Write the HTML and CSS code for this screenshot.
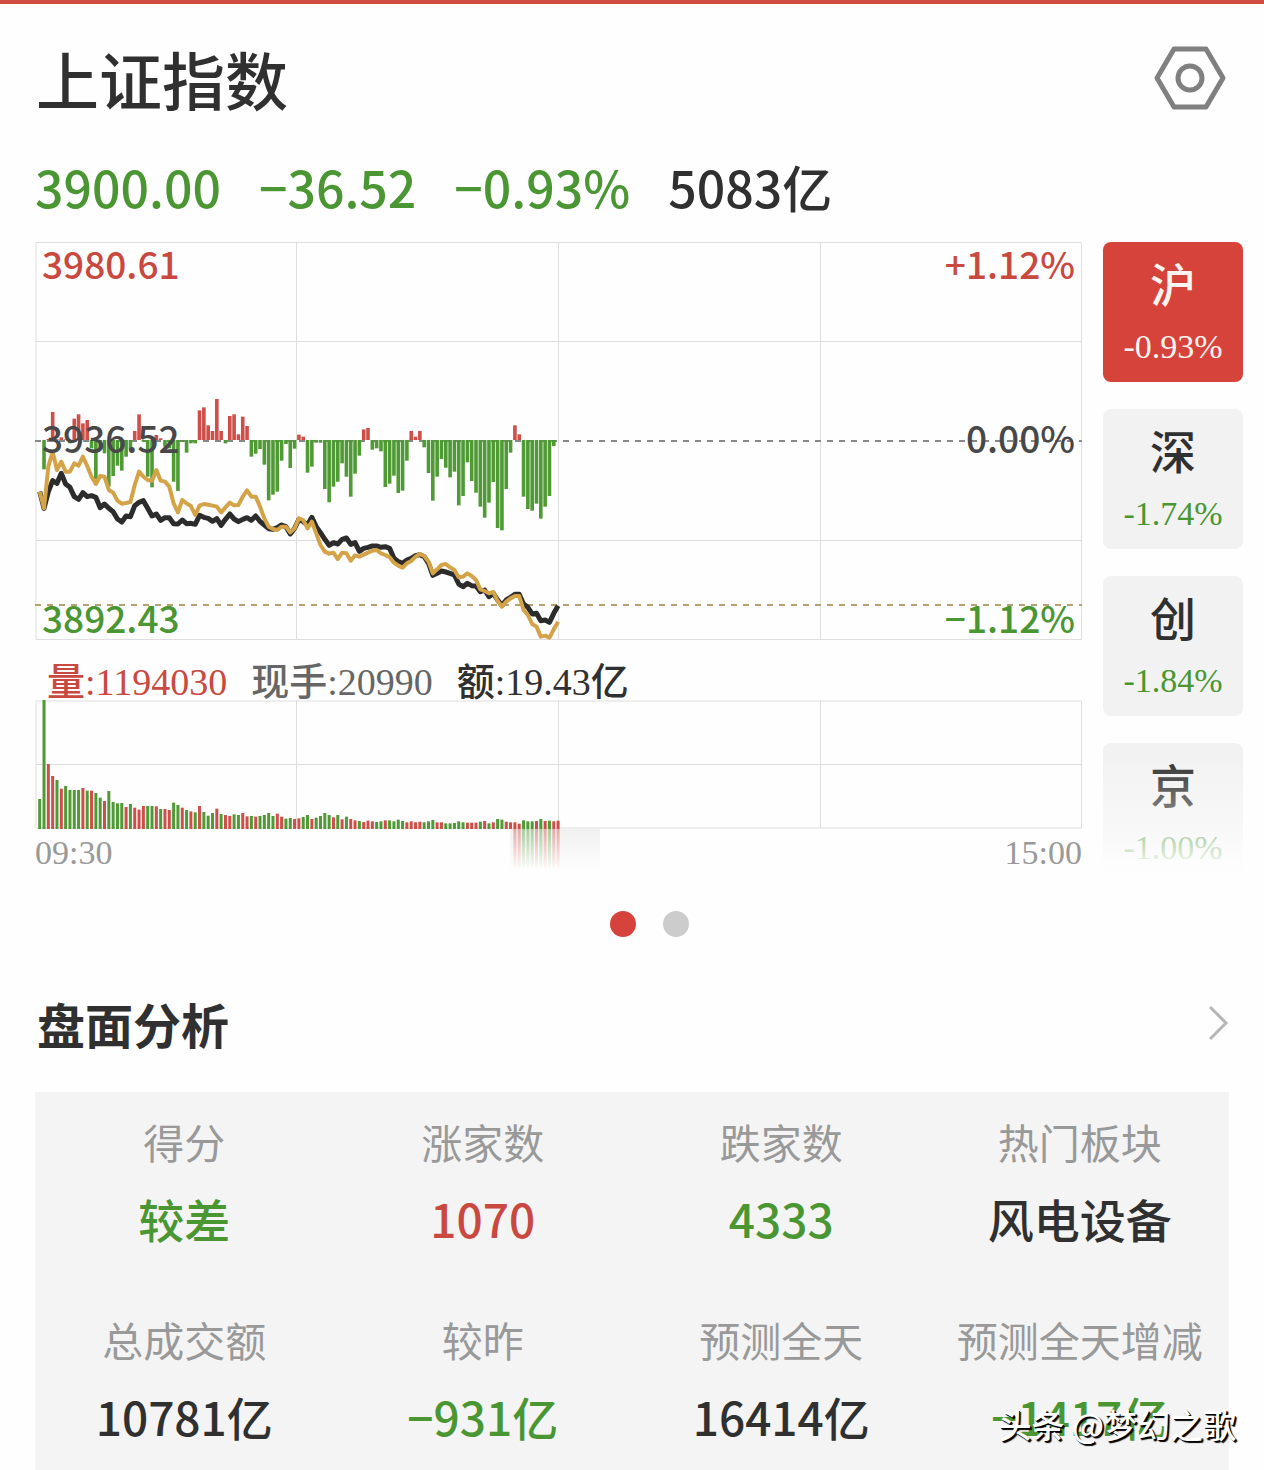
FILE: index.html
```
<!DOCTYPE html>
<html lang="zh-CN">
<head>
    <meta charset="UTF-8">
    <meta name="viewport" content="width=device-width, initial-scale=1.0">
    <title>上证指数</title>
    <link rel="stylesheet" href="styles.css">
</head>
<body>
    <header class="header">
        <h1>上证指数</h1>
        <button class="settings" aria-label="设置">
            <svg width="72" height="66" viewBox="0 0 72 66" fill="none" stroke="#808080" stroke-width="5" stroke-linejoin="round">
                <path d="M20 4H52L69 33L52 62H20L3 33Z"/>
                <circle cx="36" cy="33" r="12"/>
            </svg>
        </button>
    </header>

    <div class="quote">
        <span class="down">3900.00</span>
        <span class="down">−36.52</span>
        <span class="down">−0.93%</span>
        <span>5083亿</span>
    </div>

    <main class="market">
        <div class="charts">
            <div class="trend">
                <svg id="trend" viewBox="0 0 1047 398">
                    <path class="grid" d="M1 .5H1046.500V397.500H1V.5M1 99.500H1046M1 298.500H1046M261.500 0V398M523.500 0V398M785.500 0V398"/>
                    <path class="dash" d="M0 199H1047"/>
                    <g id="flow"></g>
                    <path class="dash last" d="M0 363H1047"/>
                    <polyline id="price" class="line"/>
                    <polyline id="average" class="line average"/>
                </svg>
                <div class="scale">
                    <span class="up">3980.61</span>
                    <span class="mid">3936.52</span>
                    <span class="down">3892.43</span>
                </div>
                <div class="scale right">
                    <span class="up">+1.12%</span>
                    <span class="mid">0.00%</span>
                    <span class="down">−1.12%</span>
                </div>
            </div>
            <div class="stats">
                <span class="up">量:1194030</span>
                <span class="hand">现手:20990</span>
                <span>额:19.43亿</span>
            </div>
            <svg id="volume" viewBox="0 0 1047 129">
                <defs>
                    <linearGradient id="fade" x1="0" y1="0" x2="0" y2="1">
                        <stop offset="0" stop-color="#fefefe" stop-opacity=".5"/>
                        <stop offset="1" stop-color="#fefefe"/>
                    </linearGradient>
                </defs>
                <path class="grid" d="M1 1H1046.500V128H1V1M1 64.500H1046M261.500 0V128M523.500 0V128M785.500 0V128"/>
                <g id="bars"></g>
                <rect x="475" y="129" width="90" height="40" fill="#e2e2e2"/>
                <g id="reflection"></g>
                <rect x="474" y="129" width="92" height="41" fill="url(#fade)"/>
            </svg>
            <div class="times"><span>09:30</span><span>15:00</span></div>
        </div>

        <nav class="tabs">
            <button class="tab active"><b>沪</b><span>-0.93%</span></button>
            <button class="tab"><b>深</b><span>-1.74%</span></button>
            <button class="tab"><b>创</b><span>-1.84%</span></button>
            <button class="tab"><b>京</b><span>-1.00%</span></button>
        </nav>
    </main>

    <div class="dots"><i class="on"></i><i></i></div>

    <section>
        <div class="section-title">
            <h2>盘面分析</h2>
            <a href="#" aria-label="更多">
                <svg width="20" height="36" viewBox="0 0 20 36" fill="none" stroke="#b5b5b5" stroke-width="3">
                    <path d="M1 2L17 18L1 34"/>
                </svg>
            </a>
        </div>
        <dl class="panel">
            <div><dt>得分</dt><dd class="down">较差</dd></div>
            <div><dt>涨家数</dt><dd class="up">1070</dd></div>
            <div><dt>跌家数</dt><dd class="down">4333</dd></div>
            <div><dt>热门板块</dt><dd>风电设备</dd></div>
            <div><dt>总成交额</dt><dd>10781亿</dd></div>
            <div><dt>较昨</dt><dd class="down">−931亿</dd></div>
            <div><dt>预测全天</dt><dd>16414亿</dd></div>
            <div><dt>预测全天增减</dt><dd class="down">−1417亿</dd></div>
        </dl>
    </section>

    <div class="watermark">头条 @梦幻之歌</div>

    <script>
        // One value per minute from 09:30, three units to a pixel
        const price = [335,385,335,302,310,280,312,322,350,358,338,350,347,352,383,372,385,395,417,426,408,410,377,367,362,385,408,402,421,413,
            413,431,432,420,431,430,433,406,412,415,424,416,436,418,402,417,425,418,413,421,408,424,435,446,448,443,435,440,462,445,
            418,425,435,412,440,458,478,496,488,492,478,474,493,488,514,505,502,498,498,502,500,505,535,545,550,540,535,527,524,530,
            550,586,580,573,576,580,585,612,620,610,617,618,635,630,650,640,660,676,660,652,643,643,672,682,702,700,722,720,727,700,677];
        const average = [335,385,260,215,270,245,275,275,250,257,230,258,290,312,288,290,330,338,362,371,369,366,315,275,290,300,302,270,302,305,
            320,370,397,360,370,378,405,377,372,374,377,380,397,382,368,376,375,350,331,350,350,380,415,440,447,450,440,440,457,445,
            415,420,445,425,460,495,515,521,518,537,518,520,542,526,530,524,518,512,510,520,525,532,548,557,563,550,543,530,522,528,
            545,580,568,555,552,562,570,592,590,580,588,600,628,633,640,636,663,680,665,655,648,648,690,705,732,740,770,767,773,748,725];
        const flow = [0,-88,3,84,2,8,2,-10,64,77,50,60,-25,-118,-25,-40,-140,-108,-77,-92,-50,-28,27,77,-5,-110,-142,15,5,-20,
            -25,-125,-153,-6,-38,-10,-10,89,98,44,27,123,27,-10,72,77,17,70,42,-50,-41,-27,-74,-181,-164,-155,-62,-12,-84,-26,
            16,10,-98,-80,-8,-8,-147,-187,-140,-125,-70,-110,-170,-101,-47,32,36,-29,-25,-34,-141,-131,-107,-159,-152,-62,27,10,27,-22,
            -99,-182,-110,-57,-83,-112,-95,-196,-168,-67,-123,-158,-200,-233,-188,-126,-264,-271,-147,-38,44,17,-170,-207,-212,-191,-236,-200,-168,-18];
        const volume = [90,387,195,159,147,121,129,117,117,117,123,115,115,108,94,84,114,81,77,78,66,75,64,58,69,69,69,68,60,60,
            57,79,72,64,57,53,50,69,51,40,48,61,45,42,39,44,42,48,38,39,37,39,42,48,39,46,37,31,33,30,
            32,36,42,30,34,39,48,42,35,42,29,37,30,26,24,21,25,23,21,23,26,26,23,28,24,20,23,20,22,20,
            23,27,20,20,17,17,18,23,20,19,19,19,22,24,17,20,30,28,22,20,20,16,26,23,23,24,30,24,25,23,25];
        // r = rising minute, g = falling minute
        const sides = 'ggrrgrggggrgrggrggggrgrrrggrgr' + 'rggrgrgrgggrgrrggrrgrggggrrggr'
            + 'rggrggggrgrgrrgrrrggrggggrrrrg' + 'ggrrgggggrrrgrgrggrrrrgggrgrgrr';

        const x = i => 4.7 + 4.32 * i;
        const rect = (i, y, h, w, up) => `<rect x="${x(i) - w / 2}" y="${y}" width="${w}" height="${h}" fill="${up ? '#cf4f48' : '#4f9a35'}"/>`;
        const points = data => data.map((v, i) => `${x(i)},${138 + v / 3}`).join(' ');

        document.getElementById('price').setAttribute('points', points(price));
        document.getElementById('average').setAttribute('points', points(average));
        document.getElementById('flow').innerHTML = flow.map((v, i) => rect(i, v > 0 ? 198 - v / 3 : 198, Math.abs(v) / 3, 3.6, v > 0)).join('');
        document.getElementById('bars').innerHTML = volume.map((v, i) => rect(i, 129 - v / 3, v / 3, 3, sides[i] === 'r')).join('');
        document.getElementById('reflection').innerHTML = volume.map((v, i) => i > 109 ? rect(i, 129, 40, 3, sides[i] === 'r') : '').join('');
    </script>
</body>
</html>
```
FILE: styles.css
```
* { box-sizing: border-box; }
body { margin: 0; background: #fefefe; color: #303030; border-top: 4px solid #d04a41; font-family: "Noto Sans CJK SC", sans-serif; font-weight: 500; position: relative; }
button { border: none; padding: 0; font: inherit; color: inherit; background: none; cursor: pointer; }
svg { display: block; }
.up { color: #c94840; }
.down { color: #4a9633; }
.header { display: flex; justify-content: space-between; align-items: center; padding: 34px 38px 0 36px; }
h1 { margin: 0; font-size: 63px; line-height: 80px; font-weight: 500; }
.quote { display: flex; gap: 38px; padding: 28px 35px 16px; font-size: 50px; line-height: 80px; }
.market { display: flex; gap: 21px; padding: 0 21px 0 35px; }
.charts { flex: 1; min-width: 0; }
.charts svg { width: 100%; overflow: visible; }
.trend { position: relative; }
.grid { fill: none; stroke: #dedede; }
.dash { fill: none; stroke: #888; stroke-width: 2; stroke-dasharray: 6 6; }
.last { stroke: #b3a274; }
.line { fill: none; stroke: #2c2c2c; stroke-width: 5; stroke-linejoin: round; }
.average { stroke: #d4a347; stroke-width: 4; }
.scale { position: absolute; top: 0; bottom: 0; left: 7px; padding: 2px 0 4px; display: flex; flex-direction: column; justify-content: space-between; font-size: 37px; line-height: 38px; }
.right { left: auto; right: 7px; text-align: right; }
.mid { color: #484848; margin-bottom: 6px; }
.stats { display: flex; gap: 24px; padding: 24px 12px 0; font-family: "Liberation Serif", "Noto Sans CJK SC", serif; font-size: 38px; line-height: 36px; }
.hand { color: #666; }
.times { display: flex; justify-content: space-between; font-family: "Liberation Serif", serif; font-size: 34px; line-height: 48px; color: #999; }
.tabs { position: relative; flex: 0 0 140px; display: flex; flex-direction: column; gap: 27px; max-height: 635px; overflow: hidden; }
.tabs::after { content: ""; position: absolute; left: 0; right: 0; bottom: 0; height: 120px; background: linear-gradient(rgba(254, 254, 254, 0), rgba(254, 254, 254, .5) 60%, #fefefe 96%); pointer-events: none; }
.tab { flex: 0 0 140px; display: flex; flex-direction: column; align-items: center; justify-content: flex-start; padding-top: 10px; border-radius: 8px; background: #f2f2f2; }
.tab b { font-size: 46px; line-height: 60px; font-weight: 500; }
.tab span { font-family: "Liberation Serif", serif; font-size: 34px; line-height: 70px; color: #4a9633; }
.tab.active { background: #d5433a; }
.tab.active b, .tab.active span { color: #fff4f0; }
.dots { display: flex; justify-content: center; gap: 27px; padding: 34px 0 0 35px; }
.dots i { width: 26px; height: 26px; border-radius: 50%; background: #ccc; }
.dots .on { background: #d5433c; }
section { padding: 46px 35px 0; }
.section-title { display: flex; justify-content: space-between; align-items: center; }
h2 { margin: 0; padding-left: 2px; font-size: 48px; line-height: 80px; }
.panel { display: grid; grid-template-columns: repeat(4, 1fr); row-gap: 65px; margin: 29px 0 0; padding: 24px 0 24px; background: #f4f4f4; text-align: center; white-space: nowrap; }
dt { font-size: 41px; line-height: 50px; font-weight: 400; color: #999; }
dd { margin: 22px 0 0; font-size: 46px; line-height: 60px; }
.panel div { padding-bottom: 1px; }
.watermark { position: absolute; right: 28px; bottom: 23px; font-size: 33px; line-height: 48px; color: #fff; text-shadow: 2px 2px 1px #000, 1px 1px 0 #000; }
```
